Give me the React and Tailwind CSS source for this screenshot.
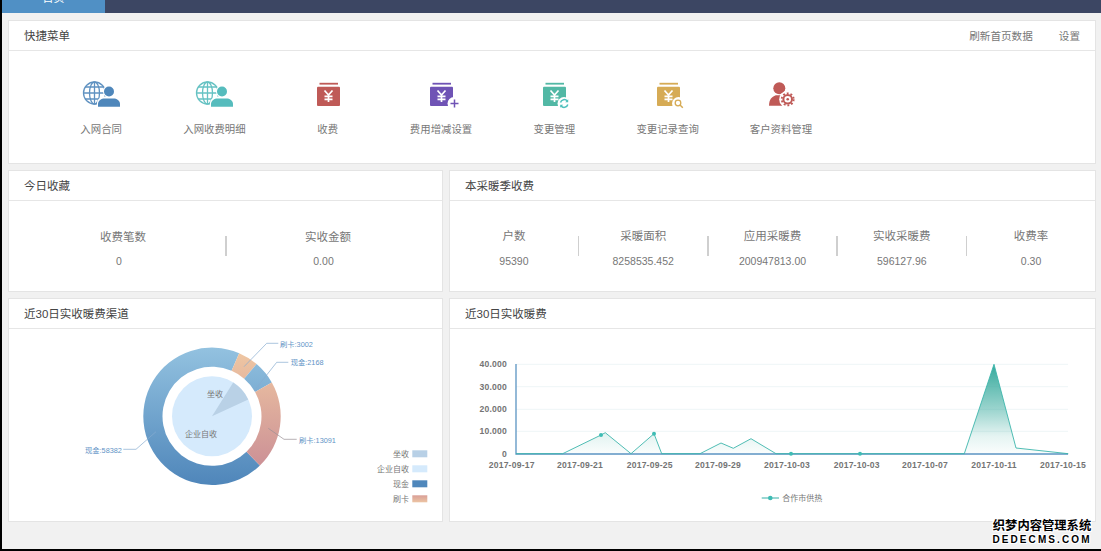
import React from "react";

const polar = (cx, cy, r, deg) => {
  const a = ((deg - 90) * Math.PI) / 180;
  return [cx + r * Math.cos(a), cy + r * Math.sin(a)];
};

// ring slice, angles in degrees from 12 o'clock
const slice = (cx, cy, r0, r1, from, to) => {
  const large = to - from > 180 ? 1 : 0;
  const [ax, ay] = polar(cx, cy, r1, from);
  const [bx, by] = polar(cx, cy, r1, to);
  if (r0 === 0) return `M${cx} ${cy}L${ax} ${ay}A${r1} ${r1} 0 ${large} 1 ${bx} ${by}Z`;
  const [cx2, cy2] = polar(cx, cy, r0, to);
  const [dx, dy] = polar(cx, cy, r0, from);
  return `M${ax} ${ay}A${r1} ${r1} 0 ${large} 1 ${bx} ${by}L${cx2} ${cy2}A${r0} ${r0} 0 ${large} 0 ${dx} ${dy}Z`;
};

const GlobeIcon = ({ color }) => (
  <svg width="44" height="32" viewBox="0 0 44 32" fill="none">
    <g stroke={color} strokeWidth="1.300" opacity="0.9">
      <circle cx="15.5" cy="15" r="11" />
      <ellipse cx="15.5" cy="15" rx="5" ry="11" />
      <path d="M15.5 4v22M4.5 15h22M6.3 9h18.4M6.3 21h18.4" />
    </g>
    <path d="M18 29v-4c0-4 4-6.5 7-6.5h9c3.500 0 7.500 2.500 7.500 6.500v4z" fill="#fff" />
    <circle cx="30" cy="13.500" r="6" fill="#fff" />
    <circle cx="30" cy="13.500" r="5" fill={color} />
    <path d="M19 28.700v-2.700c0-3.500 3.500-5.500 6.500-5.500h9c3 0 6.500 2 6.500 5.500v2.700z" fill={color} />
  </svg>
);

const MoneyIcon = ({ color, children }) => (
  <svg width="44" height="32" viewBox="0 0 44 32" fill="none">
    <rect x="13.500" y="4.800" width="18.500" height="1.800" fill={color} />
    <rect x="11" y="8.700" width="23" height="19.300" rx="1" fill={color} />
    <path d="M18.500 12.500l4 4.500 4-4.500M22.500 17v7M18.500 18.300h8M18.500 21.300h8" stroke="#fff" strokeWidth="1.700" />
    {children}
  </svg>
);

const quickMenus = [
  { label: "入网合同", icon: <GlobeIcon color="#4f87bb" /> },
  { label: "入网收费明细", icon: <GlobeIcon color="#56bcbd" /> },
  { label: "收费", icon: <MoneyIcon color="#bf5a57" /> },
  {
    label: "费用增减设置",
    icon: (
      <MoneyIcon color="#6f53b5">
        <circle cx="35" cy="25.500" r="6.500" fill="#fff" />
        <path d="M35.500 21.500v8M31.500 25.500h8" stroke="#6f53b5" strokeWidth="1.500" />
      </MoneyIcon>
    ),
  },
  {
    label: "变更管理",
    icon: (
      <MoneyIcon color="#52b8a5">
        <circle cx="32" cy="25.500" r="6.500" fill="#fff" />
        <path d="M28.500 24.500a3.800 3.800 0 0 1 6.800-1.300M35.800 26.500a3.800 3.800 0 0 1-6.800 1.300" stroke="#4fc0bc" strokeWidth="1.500" />
        <path d="M36.200 21.300v3h-3M28.200 29.700v-3h3" fill="#4fc0bc" />
      </MoneyIcon>
    ),
  },
  {
    label: "变更记录查询",
    icon: (
      <MoneyIcon color="#d6ab55">
        <circle cx="32.500" cy="25.500" r="6.500" fill="#fff" />
        <circle cx="32" cy="25" r="2.800" stroke="#d6ab55" strokeWidth="1.300" />
        <path d="M34 27l2.800 2.800" stroke="#d6ab55" strokeWidth="1.500" />
      </MoneyIcon>
    ),
  },
  {
    label: "客户资料管理",
    icon: (
      <svg width="44" height="32" viewBox="0 0 44 32" fill="none">
        <circle cx="20.300" cy="10.300" r="6" fill="#bf5a57" />
        <path d="M10 27.700c0-6 2.500-9 6.800-10.500h7c3.500 1 6 4 7 10.500z" fill="#bf5a57" />
        <circle cx="28.700" cy="21.300" r="8.500" fill="#fff" />
        <circle cx="28.700" cy="21.300" r="4.300" stroke="#bf5a57" strokeWidth="2" />
        <circle cx="28.700" cy="21.300" r="6" stroke="#bf5a57" strokeWidth="1.800" strokeDasharray="1.900 1.900" />
        <circle cx="28.700" cy="21.300" r="1.300" fill="#bf5a57" />
      </svg>
    ),
  },
];

const seasonStats = [
  { label: "户数", value: "95390" },
  { label: "采暖面积", value: "8258535.452" },
  { label: "应用采暖费", value: "200947813.00" },
  { label: "实收采暖费", value: "596127.96" },
  { label: "收费率", value: "0.30" },
];

const Card = ({ title, extra, children }) => (
  <div className="flex flex-col bg-white border border-[#e4e4e4] min-w-0">
    <div className="flex h-[30px] shrink-0 items-center justify-between border-b border-[#e6e6e6] pl-[15px] pr-[15px] pt-[2px] text-[11.500px] text-[#444]">
      <span>{title}</span>
      {extra}
    </div>
    <div className="flex-1 min-h-0">{children}</div>
  </div>
);

const Divider = () => <div className="mt-[35px] h-5 w-[1.500px] shrink-0 bg-[#cfcfcf]" />;

const PieChart = () => {
  const cx = 212;
  const cy = 416.3;
  return (
    <svg width="433" height="192" viewBox="9 329 433 192" fill="none">
      <defs>
        <linearGradient id="ringBlue" gradientUnits="userSpaceOnUse" x1="0" y1="347" x2="0" y2="485">
          <stop offset="0" stopColor="#93c2e0" />
          <stop offset="1" stopColor="#4f86ba" />
        </linearGradient>
        <linearGradient id="ringPeach" gradientUnits="userSpaceOnUse" x1="0" y1="355" x2="0" y2="465">
          <stop offset="0" stopColor="#eec5a2" />
          <stop offset="1" stopColor="#cc9196" />
        </linearGradient>
        <linearGradient id="legendPeach" x1="0" y1="0" x2="0" y2="1">
          <stop offset="0" stopColor="#d99f97" />
          <stop offset="1" stopColor="#ecc4a3" />
        </linearGradient>
      </defs>
      <path d={slice(cx, cy, 49.500, 68.700, 135.800, 383.300)} fill="url(#ringBlue)" />
      <path d={slice(cx, cy, 49.500, 68.700, 23.300, 40.500)} fill="url(#ringPeach)" />
      <path d={slice(cx, cy, 49.500, 68.700, 40.500, 60.500)} fill="url(#ringBlue)" />
      <path d={slice(cx, cy, 49.500, 68.700, 60.500, 135.800)} fill="url(#ringPeach)" />
      <circle cx={cx} cy={cy} r="40" fill="#d5eafc" />
      <path d={slice(cx, cy, 0, 40, 32, 65)} fill="#b9d1e6" />

      <g strokeWidth="0.700">
        <path d="M244 366.700L266.700 343.300H278.300" stroke="#86acd0" />
        <path d="M254.300 390.700L276.700 362.300H288.300" stroke="#86acd0" />
        <path d="M268.300 428.300L284 439.300H296.700" stroke="#9a8f95" />
        <path d="M156 431.700L136 449.300H123.300" stroke="#86acd0" />
      </g>
      <g fontSize="7.300" fill="#5f94c6">
        <text x="280" y="346.500">刷卡:3002</text>
        <text x="290.700" y="365.200">现金:2168</text>
        <text x="299" y="442.500">刷卡:13091</text>
        <text x="85" y="452.500">现金:58382</text>
      </g>
      <g fontSize="8" fill="#777" textAnchor="middle">
        <text x="215" y="397">坐收</text>
        <text x="201" y="437">企业自收</text>
      </g>

      <g fontSize="8" fill="#777" textAnchor="end">
        <text x="409" y="457">坐收</text>
        <text x="409" y="472">企业自收</text>
        <text x="409" y="487">现金</text>
        <text x="409" y="502">刷卡</text>
      </g>
      <rect x="412.300" y="450.300" width="15" height="7" fill="#b8d0e6" />
      <rect x="412.300" y="465.300" width="15" height="7" fill="#d5eafc" />
      <rect x="412.300" y="480.300" width="15" height="7" fill="#4f87bb" />
      <rect x="412.300" y="495.300" width="15" height="7" fill="url(#legendPeach)" />
    </svg>
  );
};

const linePoints =
  "516,453.700 562.700,453.700 601,435 605.300,432.700 631,453.700 654,433.700 661.700,453.700 700,453.700 721,443 733.300,448.300 751,438.700 776,453.700 964.300,453.700 994,364.300 1016,448 1068.300,453.700";
const xLabels = [
  [511.700, "2017-09-17"],
  [580, "2017-09-21"],
  [649.700, "2017-09-25"],
  [718, "2017-09-29"],
  [787, "2017-10-03"],
  [856.700, "2017-10-03"],
  [925, "2017-10-07"],
  [994, "2017-10-11"],
  [1063, "2017-10-15"],
];
const yLabels = [
  [364.300, "40.000"],
  [386.700, "30.000"],
  [409.300, "20.000"],
  [431.300, "10.000"],
  [453.700, "0"],
];

const LineChart = () => (
  <svg width="645" height="192" viewBox="450 329 645 192" fill="none">
    <defs>
      <linearGradient id="areaFill" gradientUnits="userSpaceOnUse" x1="0" y1="364" x2="0" y2="454">
        <stop offset="0" stopColor="#35a99c" />
        <stop offset="0.5" stopColor="#35a99c" stopOpacity="0.500" />
        <stop offset="0.8" stopColor="#35a99c" stopOpacity="0.130" />
        <stop offset="1" stopColor="#35a99c" stopOpacity="0.020" />
      </linearGradient>
    </defs>
    {yLabels.slice(0, 4).map(([y]) => (
      <path key={y} d={`M516 ${y}H1068`} stroke="#eef5f7" />
    ))}
    <polygon points={`516,453.700 ${linePoints} 1068.300,453.700`} fill="url(#areaFill)" />
    <path d="M516 364V454H1068" stroke="#5b94c2" strokeWidth="1.300" />
    <polyline points={linePoints} stroke="#3cb5ac" strokeWidth="0.900" strokeLinejoin="round" />
    {[[601, 435], [654, 433.700], [791, 453.700], [860, 453.700]].map(([x, y]) => (
      <circle key={x} cx={x} cy={y} r="2" fill="#3fbcb4" />
    ))}
    <g fontSize="8.600" fontWeight="700" fill="#747474" letterSpacing="0.200">
      {yLabels.map(([y, t]) => (
        <text key={y} x="507" y={y + 3} textAnchor="end">
          {t}
        </text>
      ))}
      {xLabels.map(([x, t]) => (
        <text key={x} x={x} y="468" textAnchor="middle">
          {t}
        </text>
      ))}
    </g>
    <path d="M761.700 498H779" stroke="#56bcb6" strokeWidth="1.200" />
    <circle cx="770.300" cy="498" r="2.300" fill="#3fbcb4" />
    <text x="782.300" y="501" fontSize="8" fill="#777">
      合作市供热
    </text>
  </svg>
);

export default function App() {
  return (
    <div className="relative flex h-[551px] w-full flex-col overflow-hidden border-b-2 border-l-2 border-black bg-[#f1f1f1] font-['Liberation_Sans','Noto_Sans_CJK_SC',sans-serif]">
      <div className="flex h-[13px] shrink-0 overflow-hidden bg-[#3c4663]">
        <div className="h-full w-[103px] bg-[#5090c5] text-center text-[11px] leading-[12px] text-white">
          <div className="-mt-[8px]">首页</div>
        </div>
      </div>

      <div className="flex flex-1 flex-col gap-[6px] pb-[27px] pl-[6px] pr-[5px] pt-[7px]">
        <div className="grid h-[144px] shrink-0">
          <Card
            title="快捷菜单"
            extra={
              <div className="flex gap-[26px] text-[10.600px] text-[#777]">
                <span>刷新首页数据</span>
                <span>设置</span>
              </div>
            }
          >
            <div className="flex pl-[35.500px] pt-[27px]">
              {quickMenus.map((m) => (
                <div key={m.label} className="flex w-[113.300px] flex-col items-center">
                  {m.icon}
                  <span className="mt-[12px] text-[10.400px] leading-[16px] text-[#777]">{m.label}</span>
                </div>
              ))}
            </div>
          </Card>
        </div>

        <div className="grid h-[122px] shrink-0 grid-cols-[435px_1fr] gap-[6px]">
          <Card title="今日收藏">
            <div className="flex items-start pl-2">
              <div className="flex w-[204px] flex-col items-center pt-[28px] text-[#777]">
                <span className="pl-2 text-[11.500px] leading-4">收费笔数</span>
                <span className="mt-2 text-[10.500px] leading-4">0</span>
              </div>
              <div className="w-[4px]" />
              <Divider />
              <div className="flex w-[194px] flex-col items-center pt-[28px] text-[#777]">
                <span className="pl-[9px] text-[11.500px] leading-4">实收金额</span>
                <span className="mt-2 text-[10.500px] leading-4">0.00</span>
              </div>
            </div>
          </Card>
          <Card title="本采暖季收费">
            <div className="flex items-start">
              {seasonStats.map((s, i) => (
                <React.Fragment key={s.label}>
                  {i > 0 && <Divider />}
                  <div className="flex w-[128.500px] flex-col items-center pt-[27px] text-[#777]">
                    <span className="text-[11.500px] leading-4">{s.label}</span>
                    <span className="mt-[9px] text-[10.500px] leading-4">{s.value}</span>
                  </div>
                </React.Fragment>
              ))}
            </div>
          </Card>
        </div>

        <div className="grid h-[224px] shrink-0 grid-cols-[435px_1fr] gap-[6px]">
          <Card title="近30日实收暖费渠道">
            <PieChart />
          </Card>
          <Card title="近30日实收暖费">
            <LineChart />
          </Card>
        </div>
      </div>

      {/* watermark pasted over the corner */}
      <div className="absolute bottom-[4px] left-[989px] flex w-[102px] flex-col items-center font-bold text-black [text-shadow:0_0_1px_#fff,1px_0_0_#fff,-1px_0_0_#fff,0_1px_0_#fff,0_-1px_0_#fff,1px_1px_0_#fff,-1px_-1px_0_#fff,1px_-1px_0_#fff,-1px_1px_0_#fff]">
        <div className="text-[12.300px] leading-[15px]">织梦内容管理系统</div>
        <div className="text-[10px] leading-[11px] tracking-[2.100px]">DEDECMS.COM</div>
      </div>
    </div>
  );
}
